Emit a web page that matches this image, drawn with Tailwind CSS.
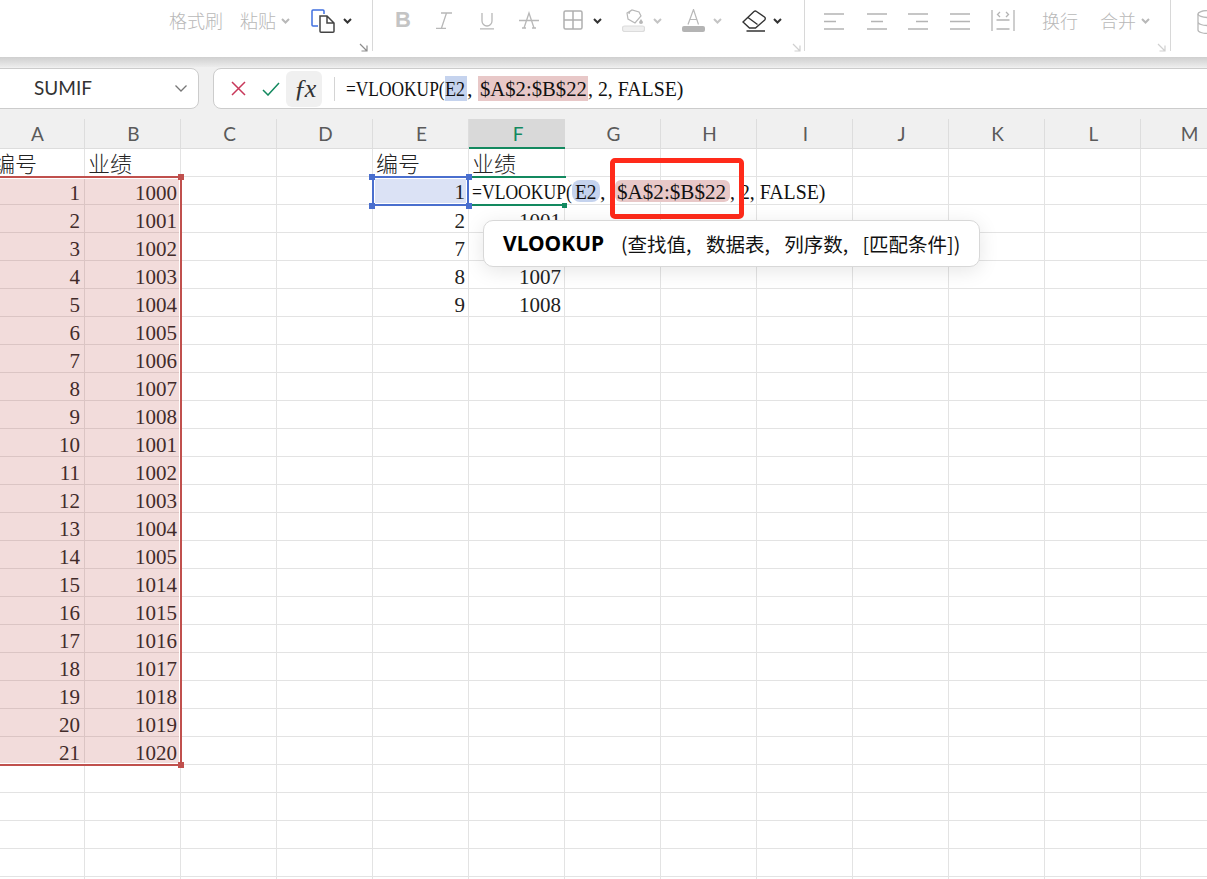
<!DOCTYPE html>
<html lang="en">
<head>
  <meta charset="UTF-8">
  <title>VLOOKUP</title>
  <script src="https://cdn.jsdelivr.net/npm/@tailwindcss/browser@4"></script>
</head>
<body class="bg-white">
<div class="relative w-[1207px] h-[879px] overflow-hidden font-['Lato','Noto_Sans_CJK_SC',sans-serif]">

  <!-- ribbon -->
  <div class="flex w-[1300px] h-[57px] bg-white text-[#b8b8b8] text-[18px] font-light leading-[24px]">
    <span class="ml-[169px] mt-[9px] w-[71px]">格式刷</span>
    <span class="mt-[9px] w-[41px]">粘贴</span>
    <svg class="mt-[18px] w-[9px] h-[7px]" viewBox="0 0 9 7" fill="none" stroke="#b8b8b8" stroke-width="2"><path d="M1 1l3.500 3.500L8 1"/></svg>
    <svg class="ml-[21px] mt-[9px] w-[24px] h-[24px]" viewBox="0 0 24 24" fill="none" stroke-width="1.500">
      <path d="M7 17H2a1 1 0 0 1-1-1V2a1 1 0 0 1 1-1h10a1 1 0 0 1 1 1v3" stroke="#3f6fe0"/>
      <path d="M9 7h7l7 7v8.200a1 1 0 0 1-1 1H10a1 1 0 0 1-1-1zM16 7v7h7" stroke="#444"/>
    </svg>
    <svg class="ml-[8px] mt-[18px] w-[9px] h-[7px]" viewBox="0 0 9 7" fill="none" stroke="#333" stroke-width="2"><path d="M1 1l3.500 3.500L8 1"/></svg>
    <svg class="ml-[7px] mt-[43px] w-[9px] h-[9px]" viewBox="0 0 9 9" fill="none" stroke="#8d8d8d" stroke-width="1.200"><path d="M1 1l7 7M8 2.500V8H2.500"/></svg>
    <div class="ml-[4px] h-[51px] w-px bg-[#d8d8d8]"></div>

    <span class="ml-[22px] mt-[8px] w-[16px] text-[22px] font-bold font-['Liberation_Sans'] text-[#c4c4c4]">B</span>
    <svg class="ml-[25px] mt-[12px] w-[16px] h-[17px]" viewBox="0 0 16 17" fill="none" stroke="#b8b8b8" stroke-width="1.300"><path d="M5 1h11M10.500 1L5.500 16M0 16.300h10"/></svg>
    <svg class="ml-[28px] mt-[12px] w-[14px] h-[18px]" viewBox="0 0 14 18" fill="none" stroke="#b8b8b8" stroke-width="1.300"><path d="M2 1v8a5 5 0 0 0 10 0V1M0 16.800h14"/></svg>
    <svg class="ml-[25px] mt-[11px] w-[20px] h-[18px]" viewBox="0 0 20 18" fill="none" stroke="#b8b8b8" stroke-width="1.300"><path d="M5 17L10 2l5 15M3 17h4M13 17h4M0 9.500h20"/></svg>
    <svg class="ml-[24px] mt-[10px] w-[20px] h-[20px]" viewBox="0 0 20 20" fill="none" stroke="#b0b0b0" stroke-width="1.500"><rect x="1" y="1" width="18" height="18" rx="1.500"/><path d="M10 1v18M1 10h18"/></svg>
    <svg class="ml-[10px] mt-[18px] w-[9px] h-[7px]" viewBox="0 0 9 7" fill="none" stroke="#333" stroke-width="2"><path d="M1 1l3.500 3.500L8 1"/></svg>
    <svg class="ml-[20px] mt-[8px] w-[23px] h-[24px]" viewBox="0 0 23 24" fill="none" stroke="#b8b8b8" stroke-width="1.200"><path d="M5 5l5-3 7 2 2 4-6 7-7-4-1-6zM10 2c-2 1-3 3-3 4"/><path d="M19 11l2 3a2 2 0 0 1-4 0z" fill="#b8b8b8" stroke="none"/><rect x="0.500" y="18" width="22" height="5.500" rx="2" fill="#efefef" stroke="#dcdcdc"/></svg>
    <svg class="ml-[8px] mt-[18px] w-[9px] h-[7px]" viewBox="0 0 9 7" fill="none" stroke="#c4c4c4" stroke-width="2"><path d="M1 1l3.500 3.500L8 1"/></svg>
    <svg class="ml-[20px] mt-[9px] w-[23px] h-[23px]" viewBox="0 0 23 23" fill="none" stroke="#b8b8b8" stroke-width="1.200"><path d="M6 15.500L11.500.500l5 15M8 10.500h7"/><rect y="17" width="23" height="6" rx="2" fill="#b4b4b4" stroke="none"/></svg>
    <svg class="ml-[8px] mt-[18px] w-[9px] h-[7px]" viewBox="0 0 9 7" fill="none" stroke="#c4c4c4" stroke-width="2"><path d="M1 1l3.500 3.500L8 1"/></svg>
    <svg class="ml-[20px] mt-[10px] w-[24px] h-[22px]" viewBox="0 0 24 22" fill="none" stroke="#333" stroke-width="1.400"><path d="M1 12L12 1.500a2 2 0 0 1 2.500 0l8 5.500a2 2 0 0 1 .2 3L13.500 18H7.500zM6 7.500l9.500 7M4.500 21H23"/></svg>
    <svg class="ml-[7px] mt-[18px] w-[9px] h-[7px]" viewBox="0 0 9 7" fill="none" stroke="#333" stroke-width="2"><path d="M1 1l3.500 3.500L8 1"/></svg>
    <svg class="ml-[10px] mt-[43px] w-[9px] h-[9px]" viewBox="0 0 9 9" fill="none" stroke="#d0d0d0" stroke-width="1.200"><path d="M1 1l7 7M8 2.500V8H2.500"/></svg>
    <div class="ml-[3px] h-[51px] w-px bg-[#d8d8d8]"></div>

    <svg class="ml-[19px] mt-[13px] w-[20px] h-[17px]" viewBox="0 0 20 17" stroke="#b4b4b4" stroke-width="1.300"><path d="M0 1h20M0 8.500h12M0 16h20"/></svg>
    <svg class="ml-[23px] mt-[13px] w-[20px] h-[17px]" viewBox="0 0 20 17" stroke="#b4b4b4" stroke-width="1.300"><path d="M0 1h20M4 8.500h12M0 16h20"/></svg>
    <svg class="ml-[21px] mt-[13px] w-[20px] h-[17px]" viewBox="0 0 20 17" stroke="#b4b4b4" stroke-width="1.300"><path d="M0 1h20M8 8.500h12M0 16h20"/></svg>
    <svg class="ml-[22px] mt-[13px] w-[20px] h-[17px]" viewBox="0 0 20 17" stroke="#b4b4b4" stroke-width="1.300"><path d="M0 1h20M0 8.500h20M0 16h20"/></svg>
    <svg class="ml-[21px] mt-[10px] w-[24px] h-[21px]" viewBox="0 0 24 21" fill="none" stroke="#b4b4b4" stroke-width="1.300"><path d="M1 0v21M23 0v21M5.500 10h13M5.500 19h13M9 2L6.500 4.500 9 7M15 2l2.500 2.500L15 7"/></svg>
    <span class="ml-[27px] mt-[9px] w-[58px]">换行</span>
    <span class="mt-[9px] w-[41px]">合并</span>
    <svg class="mt-[18px] w-[9px] h-[7px]" viewBox="0 0 9 7" fill="none" stroke="#b8b8b8" stroke-width="2"><path d="M1 1l3.500 3.500L8 1"/></svg>
    <svg class="ml-[7px] mt-[43px] w-[9px] h-[9px]" viewBox="0 0 9 9" fill="none" stroke="#d0d0d0" stroke-width="1.200"><path d="M1 1l7 7M8 2.500V8H2.500"/></svg>
    <div class="ml-[4px] h-[51px] w-px bg-[#d8d8d8]"></div>
    <svg class="ml-[26px] mt-[10px] w-[22px] h-[24px]" viewBox="0 0 22 24" fill="none" stroke="#b8b8b8" stroke-width="1.300"><ellipse cx="11" cy="4" rx="10" ry="3.500"/><path d="M1 4v16c0 2 4.500 3.500 10 3.500M1 12c0 2 4.500 3.500 10 3.500"/></svg>
  </div>
  <div class="h-[10px] bg-gradient-to-b from-[#cfcfcf] to-[#ececec]"></div>

  <!-- name box + formula bar -->
  <div class="flex w-[1300px] h-[52px] pt-px pb-[10px] bg-[#f0f0f0]">
    <div class="ml-[-10px] w-[209px] shrink-0 flex items-center justify-between pl-[43px] pr-[11px] bg-white border border-[#cccccc] rounded-lg text-[19px] text-[#333]">
      <span>SUMIF</span>
      <svg class="w-[12px] h-[7px]" viewBox="0 0 12 7" fill="none" stroke="#777" stroke-width="1.300"><path d="M.5.500L6 6 11.500.500"/></svg>
    </div>
    <div class="ml-[14px] w-[1040px] shrink-0 flex items-center bg-white border border-[#cccccc] rounded-lg">
      <svg class="ml-[17px] w-[15px] h-[15px]" viewBox="0 0 15 15" fill="none" stroke="#c8385a" stroke-width="1.500"><path d="M1 1l13 13M14 1L1 14"/></svg>
      <svg class="ml-[16px] w-[18px] h-[14px]" viewBox="0 0 18 14" fill="none" stroke="#13895f" stroke-width="1.500"><path d="M1 8l5 5L17 1"/></svg>
      <div class="ml-[6px] w-[36px] h-[36px] flex items-center justify-center rounded-md bg-[#f0f0f0] text-[26px] italic tracking-[-2px] font-['Liberation_Serif'] text-[#333]">ƒx</div>
      <div class="ml-[12px] w-px h-[24px] bg-[#d4d4d4]"></div>
      <div class="ml-[11px] flex items-center h-[25px] text-[22px] leading-[25px] text-[#111] font-['Liberation_Serif'] whitespace-nowrap">
        <span class="w-[99px]"><span class="inline-block origin-left scale-x-[0.79]">=VLOOKUP(</span></span>
        <span class="w-[22px] bg-[#c5d3ee]"><span class="inline-block origin-left scale-x-[0.82]">E2</span></span>
        <span class="w-[11px]">,</span>
        <span class="w-[110px] pl-[2px] bg-[#e8c8c8]"><span class="inline-block origin-left scale-x-[0.94]">$A$2:$B$22</span></span>
        <span class="inline-block origin-left scale-x-[0.9]">, 2, FALSE)</span>
      </div>
    </div>
  </div>

  <!-- sheet -->
  <div class="ml-[-11px] w-[1248px] h-[760px] font-['Liberation_Serif','Noto_Sans_CJK_SC',serif] text-[21px] text-[#222] bg-[repeating-linear-gradient(90deg,transparent_0,transparent_95px,#e3e3e3_95px,#e3e3e3_96px)]">
    <div class="flex h-[30px] bg-[#f0f0f0] border-b border-[#dddddd] font-['Lato'] text-[19px] text-[#5a5a5a] text-center leading-[29px]">
      <div class="w-24 pl-[2px] border-r border-[#dddddd]">A</div>
      <div class="w-24 pl-[2px] border-r border-[#dddddd]">B</div>
      <div class="w-24 pl-[2px] border-r border-[#dddddd]">C</div>
      <div class="w-24 pl-[2px] border-r border-[#dddddd]">D</div>
      <div class="w-24 pl-[2px] border-r border-[#dddddd]">E</div>
      <div class="w-24 pl-[2px] h-[30px] bg-[#d9d9d9] border-b-2 border-[#13895f] text-[#13895f]">F</div>
      <div class="w-24 pl-[2px] border-r border-[#dddddd]">G</div>
      <div class="w-24 pl-[2px] border-r border-[#dddddd]">H</div>
      <div class="w-24 pl-[2px] border-r border-[#dddddd]">I</div>
      <div class="w-24 pl-[2px] border-r border-[#dddddd]">J</div>
      <div class="w-24 pl-[2px] border-r border-[#dddddd]">K</div>
      <div class="w-24 pl-[2px] border-r border-[#dddddd]">L</div>
      <div class="w-24 pl-[2px] border-r border-[#dddddd]">M</div>
    </div>
    <div class="flex h-7 border-b border-[#e3e3e3] text-[22px] font-light leading-[27px] font-['Noto_Sans_CJK_SC']"><div class="w-24 pl-[4px]">编号</div><div class="w-24 pl-[3px]">业绩</div><div class="w-[192px]"></div><div class="w-24 pl-[3px]">编号</div><div class="w-24 pl-[3px]">业绩</div></div>
    <div class="flex h-7 border-b border-[#e3e3e3] leading-[33px] text-right"><div class="w-24 pr-[5px]">1</div><div class="w-24 pr-[4px]">1000</div></div>
    <div class="flex h-7 border-b border-[#e3e3e3] leading-[33px] text-right"><div class="w-24 pr-[5px]">2</div><div class="w-24 pr-[4px]">1001</div><div class="w-[192px]"></div><div class="w-24 pr-[4px]">2</div><div class="w-24 pr-[4px]">1001</div></div>
    <div class="flex h-7 border-b border-[#e3e3e3] leading-[33px] text-right"><div class="w-24 pr-[5px]">3</div><div class="w-24 pr-[4px]">1002</div><div class="w-[192px]"></div><div class="w-24 pr-[4px]">7</div></div>
    <div class="flex h-7 border-b border-[#e3e3e3] leading-[33px] text-right"><div class="w-24 pr-[5px]">4</div><div class="w-24 pr-[4px]">1003</div><div class="w-[192px]"></div><div class="w-24 pr-[4px]">8</div><div class="w-24 pr-[4px]">1007</div></div>
    <div class="flex h-7 border-b border-[#e3e3e3] leading-[33px] text-right"><div class="w-24 pr-[5px]">5</div><div class="w-24 pr-[4px]">1004</div><div class="w-[192px]"></div><div class="w-24 pr-[4px]">9</div><div class="w-24 pr-[4px]">1008</div></div>
    <div class="flex h-7 border-b border-[#e3e3e3] leading-[33px] text-right"><div class="w-24 pr-[5px]">6</div><div class="w-24 pr-[4px]">1005</div></div>
    <div class="flex h-7 border-b border-[#e3e3e3] leading-[33px] text-right"><div class="w-24 pr-[5px]">7</div><div class="w-24 pr-[4px]">1006</div></div>
    <div class="flex h-7 border-b border-[#e3e3e3] leading-[33px] text-right"><div class="w-24 pr-[5px]">8</div><div class="w-24 pr-[4px]">1007</div></div>
    <div class="flex h-7 border-b border-[#e3e3e3] leading-[33px] text-right"><div class="w-24 pr-[5px]">9</div><div class="w-24 pr-[4px]">1008</div></div>
    <div class="flex h-7 border-b border-[#e3e3e3] leading-[33px] text-right"><div class="w-24 pr-[5px]">10</div><div class="w-24 pr-[4px]">1001</div></div>
    <div class="flex h-7 border-b border-[#e3e3e3] leading-[33px] text-right"><div class="w-24 pr-[5px]">11</div><div class="w-24 pr-[4px]">1002</div></div>
    <div class="flex h-7 border-b border-[#e3e3e3] leading-[33px] text-right"><div class="w-24 pr-[5px]">12</div><div class="w-24 pr-[4px]">1003</div></div>
    <div class="flex h-7 border-b border-[#e3e3e3] leading-[33px] text-right"><div class="w-24 pr-[5px]">13</div><div class="w-24 pr-[4px]">1004</div></div>
    <div class="flex h-7 border-b border-[#e3e3e3] leading-[33px] text-right"><div class="w-24 pr-[5px]">14</div><div class="w-24 pr-[4px]">1005</div></div>
    <div class="flex h-7 border-b border-[#e3e3e3] leading-[33px] text-right"><div class="w-24 pr-[5px]">15</div><div class="w-24 pr-[4px]">1014</div></div>
    <div class="flex h-7 border-b border-[#e3e3e3] leading-[33px] text-right"><div class="w-24 pr-[5px]">16</div><div class="w-24 pr-[4px]">1015</div></div>
    <div class="flex h-7 border-b border-[#e3e3e3] leading-[33px] text-right"><div class="w-24 pr-[5px]">17</div><div class="w-24 pr-[4px]">1016</div></div>
    <div class="flex h-7 border-b border-[#e3e3e3] leading-[33px] text-right"><div class="w-24 pr-[5px]">18</div><div class="w-24 pr-[4px]">1017</div></div>
    <div class="flex h-7 border-b border-[#e3e3e3] leading-[33px] text-right"><div class="w-24 pr-[5px]">19</div><div class="w-24 pr-[4px]">1018</div></div>
    <div class="flex h-7 border-b border-[#e3e3e3] leading-[33px] text-right"><div class="w-24 pr-[5px]">20</div><div class="w-24 pr-[4px]">1019</div></div>
    <div class="flex h-7 border-b border-[#e3e3e3] leading-[33px] text-right"><div class="w-24 pr-[5px]">21</div><div class="w-24 pr-[4px]">1020</div></div>
    <div class="h-7 border-b border-[#e3e3e3]"></div>
    <div class="h-7 border-b border-[#e3e3e3]"></div>
    <div class="h-7 border-b border-[#e3e3e3]"></div>
    <div class="h-7 border-b border-[#e3e3e3]"></div>
  </div>

  <!-- A2:B22 range reference -->
  <div class="absolute left-[-6px] top-[176px] w-[188px] h-[590px] bg-[#c0504d]/20 border-2 border-[#c0504d] shadow-[inset_0_0_0_1px_white]"></div>
  <div class="absolute left-[178px] top-[174px] w-[6px] h-[6px] bg-[#c0504d]"></div>
  <div class="absolute left-[178px] top-[762px] w-[6px] h-[6px] bg-[#c0504d]"></div>

  <!-- E2 selected -->
  <div class="absolute left-[372px] top-[176px] w-[97px] h-[30px] bg-[#4a6fce]/20 border-2 border-[#4a6fce] shadow-[inset_0_0_0_1px_white] text-right font-['Liberation_Serif'] text-[21px] text-[#222] leading-[28px] pr-[2px]">1</div>
  <div class="absolute left-[369px] top-[174px] w-[6px] h-[6px] bg-[#4a6fce]"></div>
  <div class="absolute left-[466px] top-[174px] w-[6px] h-[6px] bg-[#4a6fce]"></div>
  <div class="absolute left-[369px] top-[203px] w-[6px] h-[6px] bg-[#4a6fce]"></div>
  <div class="absolute left-[466px] top-[203px] w-[6px] h-[6px] bg-[#4a6fce]"></div>

  <!-- F2 in-cell edit -->
  <div class="absolute left-[472px] top-[176px] w-[94px] h-[30px] bg-white border-y-2 border-[#13895f]"></div>
  <div class="absolute left-[562px] top-[203px] w-[5px] h-[5px] bg-[#13895f]"></div>
  <div class="absolute left-[472px] top-[180px] flex h-[22px] font-['Liberation_Serif'] text-[22px] leading-[24px] text-[#111] whitespace-nowrap">
    <span class="w-[100px]"><span class="inline-block origin-left scale-x-[0.8]">=VLOOKUP(</span></span>
    <span class="w-[28px] pl-[3px] rounded-lg bg-[#c5d3ee]"><span class="inline-block origin-left scale-x-[0.88]">E2</span></span>
    <span class="w-[15px]">,</span>
    <span class="w-[115px] pl-[2px] rounded-md bg-[#e8c8c8]"><span class="inline-block origin-left scale-x-[0.96]">$A$2:$B$22</span></span>
    <span class="inline-block origin-left scale-x-[0.9]">, 2, FALSE)</span>
  </div>

  <!-- red callout -->
  <div class="absolute left-[610px] top-[158px] w-[134px] h-[61px] border-[5px] border-[#ff2a1a] rounded-[5px]"></div>

  <!-- function hint -->
  <div class="absolute left-[483px] top-[220px] w-[497px] h-[47px] flex items-center pl-[19px] bg-white border border-[#d8d8d8] rounded-[10px] shadow-[0_4px_20px_rgba(0,0,0,0.1)] text-[#111] text-[19.500px] font-['Noto_Sans_CJK_SC','Noto_Sans',sans-serif] whitespace-nowrap">
    <span class="w-[118px] text-[21px] font-bold text-black font-['Noto_Sans']">VLOOKUP</span>
    <span class="[word-spacing:10px]">(查找值, 数据表, 列序数, [匹配条件])</span>
  </div>
</div>
</body>
</html>
